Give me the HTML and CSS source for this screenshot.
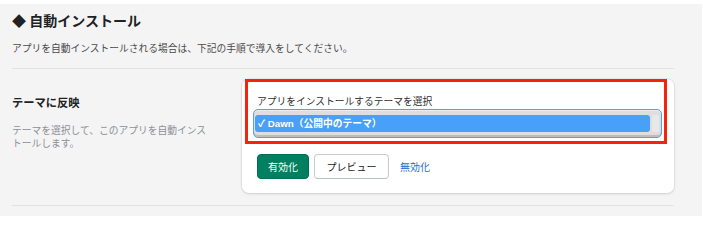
FILE: index.html
```html
<!DOCTYPE html>
<html lang="ja">
<head>
<meta charset="utf-8">
<title>自動インストール</title>
<link rel="stylesheet" href="styles.css">
</head>
<body>
<div class="panel">
  <h2 class="title">◆ 自動インストール</h2>
  <p class="lead">アプリを自動インストールされる場合は、下記の手順で導入をしてください。</p>
  <hr class="divider">
  <section class="row">
    <div class="aside">
      <h3 class="aside-title">テーマに反映</h3>
      <p class="aside-desc">テーマを選択して、このアプリを自動インストールします。</p>
    </div>
    <div class="card">
      <div class="field">
        <label class="field-label">アプリをインストールするテーマを選択</label>
        <div class="select">
          <div class="option">✓ Dawn（公開中のテーマ）</div>
          <div class="select-end"></div>
        </div>
      </div>
      <div class="actions">
        <button class="btn btn-primary">有効化</button>
        <button class="btn btn-default">プレビュー</button>
        <a class="link" href="#">無効化</a>
      </div>
      <div class="highlight"></div>
    </div>
  </section>
  <hr class="divider divider-bottom">
</div>
</body>
</html>
```

FILE: styles.css
```css
html, body {
  margin: 0;
  padding: 0;
  background: #ffffff;
}

body {
  font-family: "Liberation Sans", "Noto Sans CJK JP", sans-serif;
  color: #202223;
}

.panel {
  margin-top: 4px;
  width: 702px;
  height: 212px;
  box-sizing: border-box;
  padding: 6px 28px 0 12px;
  background: #f4f4f4;
  overflow: hidden;
}

.title {
  margin: 0;
  font-family: "Noto Sans CJK JP", sans-serif;
  font-size: 14px;
  line-height: 20px;
  font-weight: 700;
  color: #202223;
}

.lead {
  margin: 11.5px 0 0;
  font-size: 9.75px;
  line-height: 14px;
  color: #4a4a4a;
}

.divider {
  margin: 12.5px 0 0;
  border: 0;
  height: 1px;
  background: #e1e2e3;
}

.divider-bottom {
  margin-top: 12px;
}

.row {
  margin-top: 10px;
  display: grid;
  grid-template-columns: 200px 1fr;
  column-gap: 30px;
}

.aside {
  padding-top: 15.5px;
}

.aside-title {
  margin: 0;
  font-size: 11.25px;
  line-height: 16px;
  font-weight: 700;
  color: #202223;
}

.aside-desc {
  margin: 13px 0 0;
  font-size: 9.75px;
  line-height: 13px;
  color: #8c9196;
}

.card {
  position: relative;
  background: #ffffff;
  border-radius: 7px;
  box-shadow: 0 0 0 1px rgba(0, 0, 0, 0.04), 0 1px 3px rgba(0, 0, 0, 0.12);
  padding: 15.5px 15px 14px;
}

.field-label {
  display: block;
  font-size: 9.75px;
  line-height: 14px;
  color: #303030;
}

.select {
  margin: 0 -3px 0 -4px;
  height: 29px;
  box-sizing: border-box;
  border: 1px solid #5a9df2;
  border-radius: 5px;
  background: #dedede;
  box-shadow: inset 0 -2px 0 #bdbdbd, inset 0 1px 0 #ececec;
  padding: 5px 2px 5px 1px;
  display: flex;
  gap: 2px;
}

.option {
  flex: 1;
  height: 17px;
  line-height: 17px;
  border-radius: 3px;
  background: #49a0f8;
  color: #ffffff;
  font-size: 9.75px;
  font-weight: 700;
  padding-left: 3px;
}

.select-end {
  width: 7px;
  height: 17px;
  border-radius: 2px;
  background: #e8e8e8;
}

.actions {
  margin-top: 16px;
  display: flex;
  align-items: center;
  gap: 5px;
}

.btn {
  height: 25px;
  box-sizing: border-box;
  border-radius: 4px;
  font-family: "Noto Sans CJK JP", sans-serif;
  font-size: 10px;
  line-height: 23px;
  white-space: nowrap;
  cursor: pointer;
}

.btn-primary {
  padding: 0 10px;
  background: #008060;
  border: 1px solid #006e52;
  color: #ffffff;
}

.btn-default {
  padding: 0 11.5px;
  background: #ffffff;
  border: 1px solid #c9cccf;
  border-bottom-color: #babfc3;
  color: #202223;
}

.link {
  margin-left: 6px;
  font-size: 10px;
  color: #2c6ecb;
  text-decoration: none;
}

.highlight {
  position: absolute;
  left: 3px;
  top: 0;
  width: 422px;
  height: 65px;
  box-sizing: border-box;
  border: 3px solid #f5230c;
  pointer-events: none;
}
```
